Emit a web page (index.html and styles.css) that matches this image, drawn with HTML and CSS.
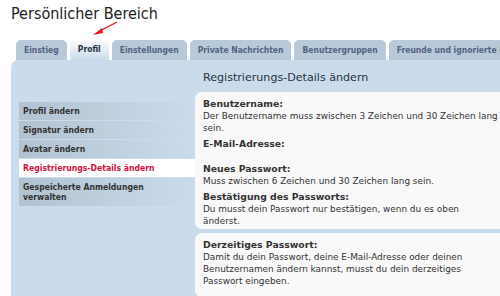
FILE: index.html
```html
<!DOCTYPE html>
<html lang="de">
<head>
<meta charset="utf-8">
<link rel="stylesheet" href="styles.css">
</head>
<body>
<div class="page">
  <h1 class="title">Persönlicher Bereich</h1>
  <svg class="arrow" width="30" height="16" viewBox="0 0 30 16">
    <line x1="27" y1="1" x2="8" y2="11" stroke="#e4151b" stroke-width="1.4"/>
    <polygon points="3,14 12,7 13,12" fill="#e4151b"/>
  </svg>
  <div class="tabs">
    <div class="tab">Einstieg</div>
    <div class="tab active">Profil</div>
    <div class="tab">Einstellungen</div>
    <div class="tab">Private Nachrichten</div>
    <div class="tab">Benutzergruppen</div>
    <div class="tab">Freunde und ignorierte Mitglieder</div>
  </div>
  <div class="panel">
    <ul class="nav">
      <li class="nav-item">Profil ändern</li>
      <li class="nav-item">Signatur ändern</li>
      <li class="nav-item">Avatar ändern</li>
      <li class="nav-item current">Registrierungs-Details ändern</li>
      <li class="nav-item">Gespeicherte Anmeldungen<br>verwalten</li>
    </ul>
    <div class="main">
      <h2 class="heading">Registrierungs-Details ändern</h2>
      <div class="box box-first">
        <div class="field">
          <div class="label">Benutzername:</div>
          <div class="explain">Der Benutzername muss zwischen 3 Zeichen und 30 Zeichen lang<br>sein.</div>
        </div>
        <div class="field field-email">
          <div class="label">E-Mail-Adresse:</div>
        </div>
        <div class="field">
          <div class="label">Neues Passwort:</div>
          <div class="explain">Muss zwischen 6 Zeichen und 30 Zeichen lang sein.</div>
        </div>
        <div class="field">
          <div class="label">Bestätigung des Passworts:</div>
          <div class="explain">Du musst dein Passwort nur bestätigen, wenn du es oben<br>änderst.</div>
        </div>
      </div>
      <div class="box box-second">
        <div class="field">
          <div class="label">Derzeitiges Passwort:</div>
          <div class="explain">Damit du dein Passwort, deine E-Mail-Adresse oder deinen<br>Benutzernamen ändern kannst, musst du dein derzeitiges<br>Passwort eingeben.</div>
        </div>
      </div>
    </div>
  </div>
</div>
</body>
</html>
```
FILE: styles.css
```css
html, body {
  margin: 0;
  padding: 0;
  background: #ffffff;
  overflow: hidden;
  width: 500px;
  height: 296px;
}
.page {
  position: relative;
  width: 640px;
  font-family: "DejaVu Sans", Verdana, sans-serif;
  color: #333333;
}
.title {
  margin: 0;
  padding: 4px 0 0 11px;
  height: 30px;
  box-sizing: border-box;
  font-family: "DejaVu Sans Condensed", "DejaVu Sans", sans-serif;
  font-weight: normal;
  font-size: 16px;
  line-height: 20px;
  color: #222222;
}
.arrow {
  position: absolute;
  left: 90px;
  top: 21px;
}
.tabs {
  display: flex;
  align-items: flex-end;
  gap: 3px;
  margin-left: 16px;
  height: 30px;
}
.tab {
  height: 20px;
  line-height: 20px;
  padding: 0 8px;
  border-radius: 5px 5px 0 0;
  background: #b8c9d9;
  color: #536482;
  font-family: "DejaVu Sans Condensed", "DejaVu Sans", sans-serif;
  font-size: 8.5px;
  font-weight: bold;
  white-space: nowrap;
}
.tab.active {
  height: 22px;
  line-height: 22px;
  background: linear-gradient(#ffffff, #cadceb);
  color: #28313f;
}
.panel {
  display: flex;
  margin-left: 11px;
  height: 236px;
  background: #cadceb;
  border-radius: 7px 0 0 0;
}
.nav {
  list-style: none;
  margin: 0 0 0 8px;
  padding: 42px 0 0 0;
  width: 176px;
  flex: none;
}
.nav-item {
  padding: 4px 4px;
  margin-bottom: 1px;
  font-family: "DejaVu Sans Condensed", "DejaVu Sans", sans-serif;
  font-size: 8.6px;
  line-height: 10px;
  font-weight: bold;
  color: #333333;
  background: linear-gradient(to right, #b2c2d1, #cadceb);
}
.nav-item.current {
  background: #ffffff;
  color: #d31141;
}
.main {
  flex: 1;
}
.heading {
  margin: 0;
  padding: 11px 0 0 8px;
  height: 32px;
  box-sizing: border-box;
  font-weight: normal;
  font-size: 11.1px;
  line-height: 14px;
  color: #28313f;
}
.box {
  background: #f9f9f9;
  border-radius: 7px;
  padding: 6px 8px;
  margin-bottom: 4px;
}
.box-first {
  height: 137px;
  box-sizing: border-box;
}
.field {
  margin-bottom: 4px;
  font-size: 8.9px;
  line-height: 12px;
}
.field-email {
  margin-bottom: 13px;
}
.label {
  font-weight: bold;
  font-size: 9.3px;
  color: #333333;
}
.explain {
  color: #333333;
}
```
